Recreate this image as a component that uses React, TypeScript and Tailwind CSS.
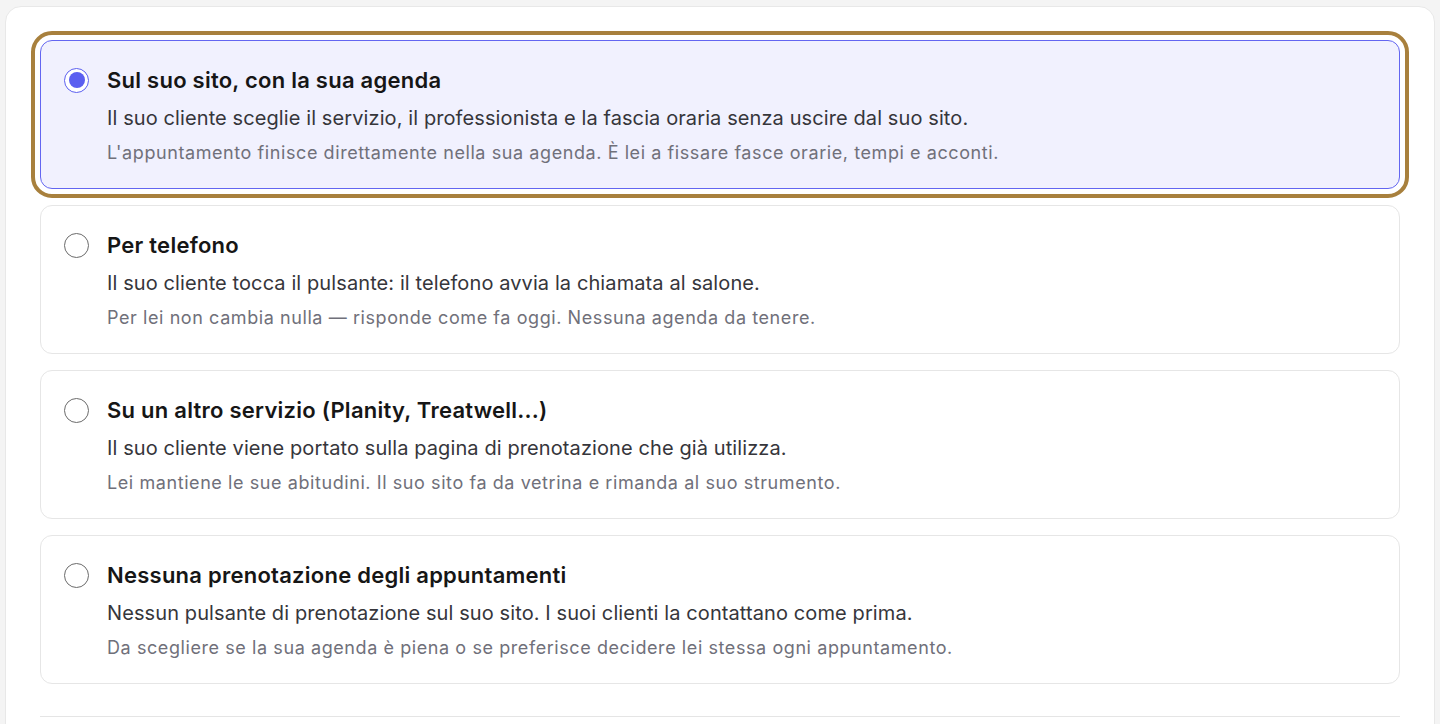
import React, { useState } from 'react';

type Option = {
  id: string;
  title: string;
  body: string;
  note: string;
};

const options: Option[] = [
  {
    id: 'site',
    title: 'Sul suo sito, con la sua agenda',
    body: 'Il suo cliente sceglie il servizio, il professionista e la fascia oraria senza uscire dal suo sito.',
    note: "L'appuntamento finisce direttamente nella sua agenda. È lei a fissare fasce orarie, tempi e acconti.",
  },
  {
    id: 'phone',
    title: 'Per telefono',
    body: 'Il suo cliente tocca il pulsante: il telefono avvia la chiamata al salone.',
    note: 'Per lei non cambia nulla — risponde come fa oggi. Nessuna agenda da tenere.',
  },
  {
    id: 'other',
    title: 'Su un altro servizio (Planity, Treatwell...)',
    body: 'Il suo cliente viene portato sulla pagina di prenotazione che già utilizza.',
    note: 'Lei mantiene le sue abitudini. Il suo sito fa da vetrina e rimanda al suo strumento.',
  },
  {
    id: 'none',
    title: 'Nessuna prenotazione degli appuntamenti',
    body: 'Nessun pulsante di prenotazione sul suo sito. I suoi clienti la contattano come prima.',
    note: 'Da scegliere se la sua agenda è piena o se preferisce decidere lei stessa ogni appuntamento.',
  },
];

const Radio: React.FC<{ checked: boolean }> = ({ checked }) => (
  <span
    className={`flex h-[25px] w-[25px] shrink-0 items-center justify-center rounded-full border-[1.5px] bg-white ${checked ? 'border-[#5b5ff0]' : 'border-[#6b6b6b]'}`}
  >
    {checked && <span className="h-4 w-4 rounded-full bg-[#5b5ff0]" />}
  </span>
);

export default function App() {
  const [selected, setSelected] = useState('site');

  return (
    <div className="min-h-screen bg-[#f4f4f4] pl-[5px] pr-[5px] pt-[6px] font-['Inter','Noto_Sans',sans-serif]">
      <div className="h-[740px] rounded-t-2xl border border-[#e8e8e8] bg-white px-[34px] pt-[33px]">
        <div className="flex flex-col gap-4">
          {options.map((o) => {
            const on = selected === o.id;
            return (
              <button
                key={o.id}
                type="button"
                onClick={() => setSelected(o.id)}
                className={`flex items-start gap-[18px] rounded-xl border pb-[23px] pl-[23px] pr-6 pt-6 text-left ${on ? 'border-[#6366f1] bg-[#f1f1fe] outline-4 outline-offset-[5px] outline-[#a8803d]' : 'border-[#e6e6e6] bg-white'}`}
              >
                <div className="flex h-[30px] items-center">
                  <Radio checked={on} />
                </div>
                <div className="flex flex-col">
                  <div className="text-[22px] font-semibold leading-[30px] tracking-[0.25px] text-[#161616]">{o.title}</div>
                  <div className="mt-[9px] text-[20px] leading-7 tracking-[0.1px] text-[#36363b]">{o.body}</div>
                  <div className="mt-[9px] text-[18px] leading-6 tracking-[0.58px] text-[#70707a]">{o.note}</div>
                </div>
              </button>
            );
          })}
        </div>
        <div className="mt-8 border-t border-[#e5e5e5]" />
      </div>
    </div>
  );
}
